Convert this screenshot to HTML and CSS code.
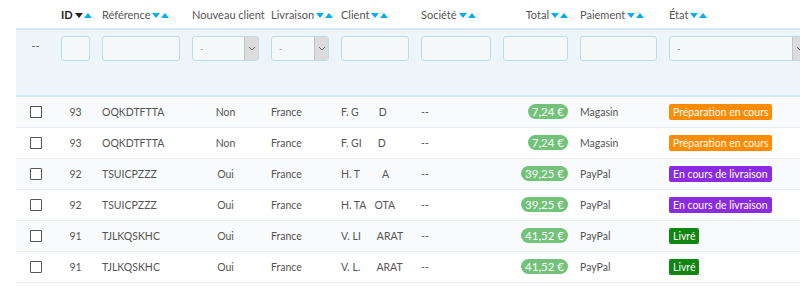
FILE: index.html
```html
<!DOCTYPE html>
<html lang="fr">
<head>
    <meta charset="UTF-8">
    <title>Commandes</title>
    <link rel="stylesheet" href="styles.css">
</head>
<body>
    <table class="orders">
        <colgroup>
            <col class="c-check">
            <col class="c-id">
            <col class="c-ref">
            <col class="c-new">
            <col class="c-country">
            <col class="c-customer">
            <col class="c-company">
            <col class="c-total">
            <col class="c-payment">
            <col class="c-state">
        </colgroup>
        <thead>
            <tr class="head-row">
                <th></th>
                <th class="center"><span class="title active">ID</span><i class="down on"></i><i class="up"></i></th>
                <th><span class="title">Référence</span><i class="down"></i><i class="up"></i></th>
                <th><span class="title">Nouveau client</span></th>
                <th><span class="title">Livraison</span><i class="down"></i><i class="up"></i></th>
                <th><span class="title">Client</span><i class="down"></i><i class="up"></i></th>
                <th><span class="title">Société</span><i class="down"></i><i class="up"></i></th>
                <th class="right"><span class="title">Total</span><i class="down"></i><i class="up"></i></th>
                <th><span class="title">Paiement</span><i class="down"></i><i class="up"></i></th>
                <th><span class="title">État</span><i class="down"></i><i class="up"></i></th>
            </tr>
            <tr class="filter-row">
                <th class="center dash">--</th>
                <th><div class="filter"></div></th>
                <th><div class="filter"></div></th>
                <th><div class="filter select"><span>-</span><b class="caret"><svg width="8" height="5" viewBox="0 0 8 5"><path d="M1 1l3 3 3-3" fill="none" stroke="#666" stroke-width="1"/></svg></b></div></th>
                <th><div class="filter select"><span>-</span><b class="caret"><svg width="8" height="5" viewBox="0 0 8 5"><path d="M1 1l3 3 3-3" fill="none" stroke="#666" stroke-width="1"/></svg></b></div></th>
                <th><div class="filter"></div></th>
                <th><div class="filter"></div></th>
                <th><div class="filter"></div></th>
                <th><div class="filter"></div></th>
                <th><div class="filter select wide"><span>-</span><b class="caret"><svg width="8" height="5" viewBox="0 0 8 5"><path d="M1 1l3 3 3-3" fill="none" stroke="#666" stroke-width="1"/></svg></b></div></th>
            </tr>
        </thead>
        <tbody>
            <tr>
                <td class="center"><span class="check"></span></td>
                <td class="center">93</td>
                <td>OQKDTFTTA</td>
                <td class="center">Non</td>
                <td>France</td>
                <td>F. G<span class="hidden-name w20"></span>D</td>
                <td>--</td>
                <td class="right"><span class="amount">7,24 €</span></td>
                <td>Magasin</td>
                <td><span class="state orange">Préparation en cours</span></td>
            </tr>
            <tr>
                <td class="center"><span class="check"></span></td>
                <td class="center">93</td>
                <td>OQKDTFTTA</td>
                <td class="center">Non</td>
                <td>France</td>
                <td>F. GI<span class="hidden-name w16"></span>D</td>
                <td>--</td>
                <td class="right"><span class="amount">7,24 €</span></td>
                <td>Magasin</td>
                <td><span class="state orange">Préparation en cours</span></td>
            </tr>
            <tr>
                <td class="center"><span class="check"></span></td>
                <td class="center">92</td>
                <td>TSUICPZZZ</td>
                <td class="center">Oui</td>
                <td>France</td>
                <td>H. T<span class="hidden-name w22"></span>A</td>
                <td>--</td>
                <td class="right"><span class="amount">39,25 €</span></td>
                <td>PayPal</td>
                <td><span class="state purple">En cours de livraison</span></td>
            </tr>
            <tr>
                <td class="center"><span class="check"></span></td>
                <td class="center">92</td>
                <td>TSUICPZZZ</td>
                <td class="center">Oui</td>
                <td>France</td>
                <td>H. TA<span class="hidden-name w8"></span>OTA</td>
                <td>--</td>
                <td class="right"><span class="amount">39,25 €</span></td>
                <td>PayPal</td>
                <td><span class="state purple">En cours de livraison</span></td>
            </tr>
            <tr>
                <td class="center"><span class="check"></span></td>
                <td class="center">91</td>
                <td>TJLKQSKHC</td>
                <td class="center">Oui</td>
                <td>France</td>
                <td>V. LI<span class="hidden-name w16"></span>ARAT</td>
                <td>--</td>
                <td class="right"><span class="amount">41,52 €</span></td>
                <td>PayPal</td>
                <td><span class="state green">Livré</span></td>
            </tr>
            <tr>
                <td class="center"><span class="check"></span></td>
                <td class="center">91</td>
                <td>TJLKQSKHC</td>
                <td class="center">Oui</td>
                <td>France</td>
                <td>V. L.<span class="hidden-name w16"></span>ARAT</td>
                <td>--</td>
                <td class="right"><span class="amount">41,52 €</span></td>
                <td>PayPal</td>
                <td><span class="state green">Livré</span></td>
            </tr>
        </tbody>
    </table>
</body>
</html>
```

FILE: styles.css
```css
* {
    margin: 0;
    padding: 0;
    box-sizing: border-box;
}

html, body {
    overflow: hidden;
    background-color: white;
}

body {
    font-family: Lato, "Open Sans", sans-serif;
    font-size: 11px;
    color: #555;
}

.orders {
    margin-left: 16px;
    width: 806px;
    table-layout: fixed;
    border-collapse: collapse;
}

.c-check { width: 39px; }
.c-id { width: 41px; }
.c-ref { width: 90px; }
.c-new { width: 79px; }
.c-country { width: 70px; }
.c-customer { width: 80px; }
.c-company { width: 82px; }
.c-total { width: 77px; }
.c-payment { width: 89px; }
.c-state { width: 159px; }

th, td {
    padding: 0 6px;
    text-align: left;
    white-space: nowrap;
    overflow: hidden;
}

.center { text-align: center; }
.right { text-align: right; }

/* header */

.head-row th {
    height: 29px;
    padding-top: 1px;
    font-weight: normal;
    vertical-align: middle;
}

.title {
    color: #555;
}

.title.active {
    color: #222;
    font-weight: bold;
}

.down, .up {
    display: inline-block;
    width: 0;
    height: 0;
    margin-left: 1px;
    border-left: 4px solid transparent;
    border-right: 4px solid transparent;
    vertical-align: 1px;
}

.down {
    margin-left: 2px;
    border-top: 5px solid #00aff0;
}

.down.on {
    border-top-color: #222;
}

.up {
    border-bottom: 5px solid #00aff0;
}

/* filters */

.filter-row th {
    height: 67px;
    padding-top: 6px;
    vertical-align: top;
    background-color: #edf5fb;
    border-top: 2px solid #d3e8f4;
    border-bottom: 2px solid #d3e8f4;
    font-weight: normal;
}

.filter-row .dash {
    padding-top: 9px;
    color: #555;
}

.filter {
    width: 100%;
    height: 25px;
    background-color: #f5f8f9;
    border: 1px solid #bcdcea;
    border-radius: 3px;
}

.select {
    display: flex;
    align-items: center;
    overflow: hidden;
}

.select span {
    flex: 1;
    padding-left: 7px;
    color: #888;
    font-size: 9px;
}

.select .caret {
    width: 14px;
    height: 100%;
    display: flex;
    align-items: center;
    justify-content: center;
    background-color: #dcdcdc;
    border-left: 1px solid #c4c4c4;
}

.select.wide {
    width: 138px;
}

/* rows */

tbody td {
    height: 31px;
    font-size: 10.5px;
    border-bottom: 1px solid #eaedf0;
    vertical-align: middle;
}

tbody tr:nth-child(odd) {
    background-color: #f9fafb;
}

.check {
    display: inline-block;
    width: 12px;
    height: 12px;
    border: 1px solid #555;
    border-radius: 1px;
    background-color: white;
    vertical-align: middle;
}

.hidden-name {
    display: inline-block;
    height: 10px;
}

.w8 { width: 8px; }
.w16 { width: 16px; }
.w20 { width: 20px; }
.w22 { width: 22px; }

.amount {
    display: inline-block;
    padding: 0 4px;
    line-height: 15px;
    border-radius: 8px;
    background-color: #72c279;
    color: white;
    font-size: 11.5px;
}

.state {
    display: inline-block;
    padding: 0 4px;
    line-height: 16px;
    border-radius: 2px;
    color: white;
    font-size: 10.5px;
}

.orange { background-color: #ff8c00; }
.purple { background-color: #8a2be2; }
.green { background-color: #108510; }
```
